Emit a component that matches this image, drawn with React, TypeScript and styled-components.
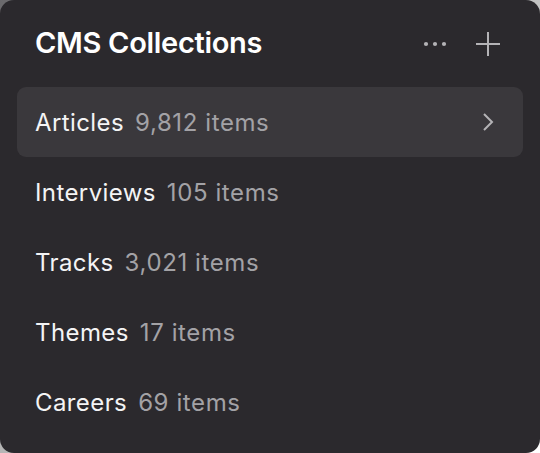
import React from "react";
import styled, { createGlobalStyle } from "styled-components";

const Global = createGlobalStyle`
  html, body { margin: 0; padding: 0; }
  body {
    width: 540px; height: 453px; overflow: hidden;
    background: linear-gradient(135deg, #6a696c 0%, #bdbdbd 50%, #ffffff 100%);
    font-family: Inter, "Noto Sans", sans-serif;
    -webkit-font-smoothing: antialiased;
  }
`;

const Card = styled.div`
  box-sizing: border-box;
  width: 540px;
  height: 453px;
  background: #2b292d;
  border-radius: 14px;
  padding: 0 17px;
  display: flex;
  flex-direction: column;
`;

const Header = styled.div`
  height: 87px;
  display: flex;
  align-items: center;
  justify-content: space-between;
  padding: 0 18px;
  box-sizing: border-box;
`;

const Title = styled.h1`
  margin: 0;
  font-size: 29px;
  font-weight: 600;
  color: #ffffff;
  letter-spacing: -0.3px;
  margin-top: -2px;
`;

const Actions = styled.div`
  display: flex;
  align-items: center;
  gap: 28px;
  color: #b4b3b6;
  margin-right: 4px;
`;

const IconBtn = styled.button`
  background: none;
  border: none;
  padding: 0;
  color: inherit;
  display: flex;
  align-items: center;
  justify-content: center;
`;

const List = styled.div`
  display: flex;
  flex-direction: column;
`;

const Row = styled.div<{ $active?: boolean }>`
  height: 70px;
  display: flex;
  align-items: center;
  padding: 0 29px 0 18px;
  border-radius: 9px;
  background: ${(p) => (p.$active ? "#3a383c" : "transparent")};
`;

const Name = styled.span`
  font-size: 24px;
  letter-spacing: 0.4px;
  color: #f4f4f5;
  margin-right: 11px;
`;

const Count = styled.span`
  font-size: 24px;
  letter-spacing: 0.6px;
  color: #a3a2a6;
  flex: 1;
`;

const items = [
  { name: "Articles", count: "9,812 items", active: true },
  { name: "Interviews", count: "105 items" },
  { name: "Tracks", count: "3,021 items" },
  { name: "Themes", count: "17 items" },
  { name: "Careers", count: "69 items" },
];

export default function App() {
  return (
    <>
      <Global />
      <Card>
        <Header>
          <Title>CMS Collections</Title>
          <Actions>
            <IconBtn aria-label="More">
              <svg width="24" height="6" viewBox="0 0 24 6">
                <circle cx="3" cy="3" r="2.1" fill="currentColor" />
                <circle cx="12" cy="3" r="2.1" fill="currentColor" />
                <circle cx="21" cy="3" r="2.1" fill="currentColor" />
              </svg>
            </IconBtn>
            <IconBtn aria-label="Add">
              <svg width="26" height="26" viewBox="0 0 26 26">
                <path d="M13 1v24M1 13h24" stroke="currentColor" strokeWidth="2" />
              </svg>
            </IconBtn>
          </Actions>
        </Header>
        <List>
          {items.map((it) => (
            <Row key={it.name} $active={it.active}>
              <Name>{it.name}</Name>
              <Count>{it.count}</Count>
              {it.active && (
                <svg width="12" height="20" viewBox="0 0 12 20" style={{ color: "#b4b3b6" }}>
                  <path d="M2 2l8 8-8 8" fill="none" stroke="currentColor" strokeWidth="2" />
                </svg>
              )}
            </Row>
          ))}
        </List>
      </Card>
    </>
  );
}
